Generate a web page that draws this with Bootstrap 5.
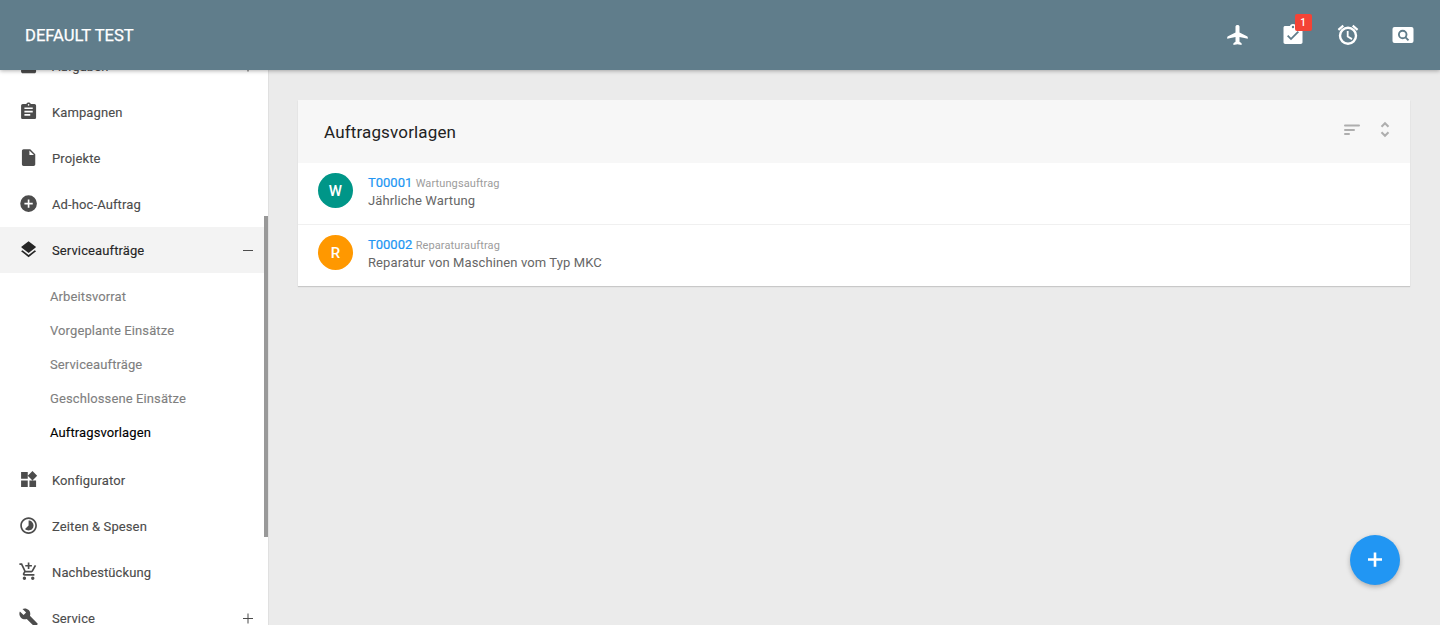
<!DOCTYPE html>
<html lang="de">
<head>
<meta charset="utf-8">
<meta name="viewport" content="width=device-width, initial-scale=1">
<title>Auftragsvorlagen</title>
<link href="https://cdn.jsdelivr.net/npm/bootstrap@5.3.0/dist/css/bootstrap.min.css" rel="stylesheet">
<script src="https://cdn.jsdelivr.net/npm/bootstrap@5.3.0/dist/js/bootstrap.bundle.min.js" defer></script>
<style>
body{font-family:Roboto,sans-serif;font-size:13px;line-height:18px;color:#666;background:#ebebeb}
a{text-decoration:none}
svg{display:block;fill:currentColor;flex:none}
.topbar{height:70px;padding:0 25px;background:#607d8b;box-shadow:0 1px 4px rgba(0,0,0,.3);z-index:5}
.brand-name{padding-top:2px;font-size:16.600px;line-height:24px;font-weight:400;-webkit-text-stroke:.25px #fff}
.top-icons{gap:31.200px}
.count{left:14px;top:-9px;width:17px;height:17px;border-radius:2px;background:#f44336;font-size:10px;line-height:18px;font-weight:500}
.sidebar{width:268px;box-shadow:0 0 1px rgba(0,0,0,.25);z-index:1}
.side-scroll{margin-top:-27px;-webkit-text-stroke:.12px currentColor;letter-spacing:.11px}
.side-link{height:46px;padding:0 14px 0 18.500px;gap:13.500px;color:#4c4c4c}
.side-link span{padding-top:2px}
.side-link svg{stroke:none}
.side-link.current{background:#f3f3f3;color:#262626}
.side-link .toggle{color:#4c4c4c}
.sub-menu{padding:7px 0 7px 50px}
.sub-menu a{line-height:34px;color:#7f7f7f}
.sub-menu a.current{color:#000}
.thumb{left:264px;top:146px;width:4px;height:321px;background:#999;z-index:2}
.content-area{padding:30px}
.panel{box-shadow:0 1px 1px rgba(0,0,0,.15)}
.panel-head{height:63px;padding:1px 16px 0 26px;background:#f7f7f7}
.panel-head h2{font-size:17px;line-height:24px;color:#222;letter-spacing:.15px}
.entry{height:61px;padding:10px 20px;gap:15px;letter-spacing:.11px}
.entry+.entry{height:62px;border-top:1px solid #f0f0f0}
.entry-line{height:19px;padding-top:1px}
.avatar{width:35px;height:35px;font-size:15px;font-weight:500}
.entry-id{color:#2196f3;font-weight:400;-webkit-text-stroke:.2px #2196f3;letter-spacing:0}
.entry-kind{font-size:11px;color:#9c9c9c}
.fab{right:40px;bottom:40px;width:50px;height:50px;background:#2196f3;box-shadow:0 2px 5px rgba(0,0,0,.26)}
</style>
</head>
<body class="vh-100 overflow-hidden d-flex flex-column">
<header class="topbar d-flex align-items-center justify-content-between text-white position-relative flex-shrink-0">
  <span class="brand-name">DEFAULT TEST</span>
  <nav class="top-icons d-flex align-items-center">
    <a href="#" class="text-white"><svg width="24" height="24" viewBox="0 0 24 24"><path d="M10.500 3.600c0-1 .9-1.600 2-1.600s2 .6 2 1.600v5.900l7.500 3.700c.5.300.8.700.8 1.200v1.300l-8.300-1.800v4.800l1.800 1.300c.2.200.3.400.3.600V22l-4.100-.8-4.100.8v-1.400c0-.2.100-.4.300-.6l1.800-1.300v-4.800l-8.300 1.800v-1.300c0-.5.300-.9.8-1.200l7.500-3.700z"/></svg></a>
    <a href="#" class="text-white position-relative"><svg width="24" height="24" viewBox="0 0 24 24"><path fill-rule="evenodd" d="M19.500 3H15.200A3.300 3.300 0 0 0 12 1a3.300 3.300 0 0 0-3.200 2H4.300c-1.100 0-1.800.7-1.800 1.700v14.600c0 1 .7 1.700 1.800 1.700h15.400c1.100 0 1.800-.7 1.800-1.700V4.700c0-1-.9-1.700-2-1.700zM12 2.800a1.200 1.200 0 1 1 0 2.400 1.200 1.200 0 0 1 0-2.400zM10 17.300l-4-4 1.300-1.300 2.700 2.700 6.700-6.700 1.300 1.300z"/></svg><span class="count position-absolute text-center">1</span></a>
    <a href="#" class="text-white"><svg width="24" height="24" viewBox="0 0 24 24"><g fill="none" stroke="currentColor"><circle cx="12" cy="12.800" r="8" stroke-width="2.400"/><path stroke-width="2.200" d="M2.400 6.800L7.300 2.700M21.600 6.800L16.700 2.700"/><path stroke-width="1.800" d="M11.700 8v5.600l4.300 2.500"/></g></svg></a>
    <a href="#" class="text-white"><svg width="24" height="24" viewBox="0 0 24 24"><rect x="1.500" y="4" width="21" height="16" rx="2"/><g fill="none" stroke="#607d8b" stroke-width="1.900"><circle cx="11.700" cy="11.500" r="3.800"/><path d="M14.300 14.200l3.200 3.200"/></g></svg></a>
  </nav>
</header>
<div class="d-flex flex-grow-1 position-relative overflow-hidden">
  <aside class="sidebar bg-white flex-shrink-0">
    <nav class="side-scroll">
      <a href="#" class="side-link d-flex align-items-center"><svg width="20" height="20" viewBox="0.500 0.500 24 24"><path d="M3 3h18v16.500c0 1-1 1.800-2 1.800H5c-1 0-2-.8-2-1.800z"/></svg><span class="flex-grow-1">Aufgaben</span><svg class="toggle" width="12" height="12" viewBox="0 0 12 12"><path d="M1 6h10v1H1zM5.500 1.500h1v10h-1z"/></svg></a>
      <a href="#" class="side-link d-flex align-items-center"><svg width="20" height="20" viewBox="0.500 0.500 24 24"><path d="M19 3h-4.180C14.400 1.840 13.300 1 12 1c-1.300 0-2.400.84-2.820 2H5c-1.100 0-2 .9-2 2v14c0 1.100.9 2 2 2h14c1.100 0 2-.9 2-2V5c0-1.100-.9-2-2-2zm-7 0c.55 0 1 .45 1 1s-.45 1-1 1-1-.45-1-1 .45-1 1-1zm2 14H7v-2h7v2zm3-4H7v-2h10v2zm0-4H7V7h10v2z"/></svg><span>Kampagnen</span></a>
      <a href="#" class="side-link d-flex align-items-center"><svg width="20" height="20" viewBox="0.500 0.500 24 24"><path d="M6 2c-1.100 0-2 .9-2 2v16c0 1.100.9 2 2 2h12c1.100 0 2-.9 2-2V8l-6-6H6zm7 7V3.500L18.500 9H13z"/></svg><span>Projekte</span></a>
      <a href="#" class="side-link d-flex align-items-center"><svg width="20" height="20" viewBox="0.500 0.500 24 24"><path d="M12 2a10 10 0 1 0 0 20 10 10 0 0 0 0-20zm5 11h-4v4h-2v-4H7v-2h4V7h2v4h4v2z"/></svg><span>Ad-hoc-Auftrag</span></a>
      <a href="#" class="side-link current d-flex align-items-center"><svg width="20" height="20" viewBox="0.500 0.500 24 24"><path d="M12 18.540l-7.370-5.730L3 14.070l9 7 9-7-1.630-1.270L12 18.540zM12 16l7.360-5.730L21 9l-9-7-9 7 1.630 1.270L12 16z"/></svg><span class="flex-grow-1">Serviceaufträge</span><svg class="toggle" width="12" height="12" viewBox="0 0 12 12"><path d="M1 6h10v1H1z"/></svg></a>
      <div class="sub-menu d-flex flex-column">
        <a href="#">Arbeitsvorrat</a>
        <a href="#">Vorgeplante Einsätze</a>
        <a href="#">Serviceaufträge</a>
        <a href="#">Geschlossene Einsätze</a>
        <a href="#" class="current">Auftragsvorlagen</a>
      </div>
      <a href="#" class="side-link d-flex align-items-center"><svg width="20" height="20" viewBox="0.500 0.500 24 24"><path d="M13 13v8h8v-8h-8zM3 21h8v-8H3v8zM3 3v8h8V3H3zm13.660-1.310L11 7.340 16.660 13l5.660-5.660-5.660-5.650z"/></svg><span>Konfigurator</span></a>
      <a href="#" class="side-link d-flex align-items-center"><svg width="20" height="20" viewBox="0.500 0.500 24 24"><path d="M16.240 7.760C15.070 6.590 13.540 6 12 6v6l-4.240 4.240c2.340 2.340 6.140 2.340 8.490 0 2.340-2.340 2.340-6.140-.01-8.480zM12 2C6.480 2 2 6.480 2 12s4.480 10 10 10 10-4.480 10-10S17.520 2 12 2zm0 18c-4.420 0-8-3.580-8-8s3.580-8 8-8 8 3.580 8 8-3.580 8-8 8z"/></svg><span>Zeiten &amp; Spesen</span></a>
      <a href="#" class="side-link d-flex align-items-center"><svg width="20" height="20" viewBox="0.500 0.500 24 24"><path d="M11 9h2V6h3V4h-3V1h-2v3H8v2h3v3zm-4 9c-1.100 0-1.990.9-1.990 2S5.900 22 7 22s2-.9 2-2-.9-2-2-2zm10 0c-1.100 0-1.990.9-1.990 2s.89 2 1.990 2 2-.9 2-2-.9-2-2-2zm-9.830-3.250l.03-.12.9-1.630h7.450c.75 0 1.410-.41 1.750-1.030l3.860-7.010L19.420 4h-.01l-1.100 2-2.760 5H8.530l-.13-.27L6.160 6l-.95-2-.94-2H1v2h2l3.600 7.590-1.350 2.450c-.16.280-.25.610-.25.960 0 1.100.9 2 2 2h12v-2H7.420c-.13 0-.25-.11-.25-.25z"/></svg><span>Nachbestückung</span></a>
      <a href="#" class="side-link d-flex align-items-center"><svg width="20" height="20" viewBox="0.500 0.500 24 24"><path d="M22.700 19l-9.100-9.100c.9-2.300.4-5-1.500-6.900-2-2-5-2.400-7.400-1.300L9 6 6 9 1.600 4.700C.4 7.100.9 10.100 2.900 12.100c1.900 1.900 4.600 2.400 6.900 1.500l9.100 9.100c.4.4 1 .4 1.400 0l2.300-2.300c.5-.4.5-1.100.1-1.400z"/></svg><span class="flex-grow-1">Service</span><svg class="toggle" width="12" height="12" viewBox="0 0 12 12"><path d="M1 6h10v1H1zM5.500 1.500h1v10h-1z"/></svg></a>
    </nav>
  </aside>
  <div class="thumb position-absolute"></div>
  <main class="content-area flex-grow-1">
    <section class="panel bg-white">
      <div class="panel-head d-flex align-items-center justify-content-between">
        <h2 class="m-0 fw-normal">Auftragsvorlagen</h2>
        <div class="d-flex align-items-center pb-1" style="color:#aeaeae;gap:15px">
          <svg width="18" height="18" viewBox="0 0 18 18"><g fill="none" stroke="currentColor" stroke-width="2" stroke-linecap="round"><path d="M2 4.500h14M2 9h9M2 13h4"/></g></svg>
          <svg width="18" height="18" viewBox="0 0 18 18"><g fill="none" stroke="currentColor" stroke-width="2.100"><path d="M5.500 5.800L9 2.300l3.500 3.500M5.500 11.200L9 14.700l3.500-3.500"/></g></svg>
        </div>
      </div>
      <div class="entry d-flex">
        <div class="avatar rounded-circle d-flex align-items-center justify-content-center text-white flex-shrink-0" style="background:#009688">W</div>
        <div><div class="entry-line"><a href="#" class="entry-id">T00001</a> <span class="entry-kind">Wartungsauftrag</span></div><div>Jährliche Wartung</div></div>
      </div>
      <div class="entry d-flex">
        <div class="avatar rounded-circle d-flex align-items-center justify-content-center text-white flex-shrink-0" style="background:#ff9800">R</div>
        <div><div class="entry-line"><a href="#" class="entry-id">T00002</a> <span class="entry-kind">Reparaturauftrag</span></div><div>Reparatur von Maschinen vom Typ MKC</div></div>
      </div>
    </section>
  </main>
  <a href="#" class="fab position-absolute rounded-circle d-flex align-items-center justify-content-center text-white"><svg width="16" height="16" viewBox="0 0 16 16"><path d="M1 6.200h14v2.600H1zM6.700.5h2.600v14.200H6.700z"/></svg></a>
</div>
</body>
</html>
